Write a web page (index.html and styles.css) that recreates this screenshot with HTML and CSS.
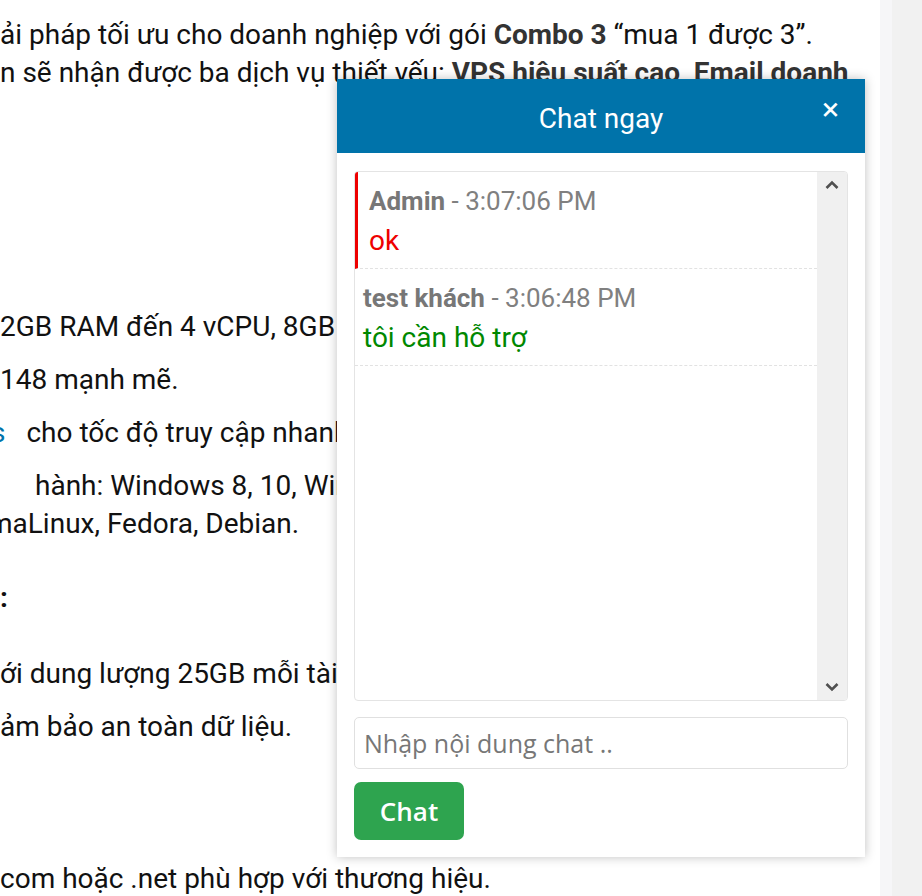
FILE: index.html
```html
<!DOCTYPE html>
<html lang="vi">
<head>
    <meta charset="UTF-8">
    <meta name="viewport" content="width=device-width, initial-scale=1.0">
    <title>Combo 3 - Chat ngay</title>
    <link rel="stylesheet" href="styles.css">
</head>
<body>

<div class="page">
    <main class="article">
        <p class="intro">ải pháp tối ưu cho doanh nghiệp với gói <b>Combo 3</b> “mua 1 được 3”.<br>n sẽ nhận được ba dịch vụ thiết yếu: <b>VPS hiệu suất cao, Email doanh</b></p>

        <ul class="specs">
            <li>2GB RAM đến 4 vCPU, 8GB RAM</li>
            <li>148 mạnh mẽ.</li>
            <li><span class="link-tail">s</span> cho tốc độ truy cập nhanh</li>
            <li class="os">hành: Windows 8, 10, Windows Server<br><span class="cut">m</span>aLinux, Fedora, Debian.</li>
        </ul>

        <h3 class="sub">:</h3>

        <ul class="specs mail">
            <li>ới dung lượng 25GB mỗi tài khoản</li>
            <li>ảm bảo an toàn dữ liệu.</li>
        </ul>

        <p class="domain">com hoặc .net phù hợp với thương hiệu.</p>
    </main>
    <div class="rail"></div>
    <div class="rail-2"></div>
</div>

<!-- khung chat noi -->
<div class="chat-box">
    <div class="chat-head">
        <span class="chat-title">Chat ngay</span>
        <span class="chat-close">&times;</span>
    </div>
    <div class="chat-body">
        <div class="chat-log">
            <div class="chat-list">
                <div class="msg msg-admin">
                    <div class="msg-meta"><b>Admin</b> - 3:07:06 PM</div>
                    <div class="msg-text">ok</div>
                </div>
                <div class="msg msg-guest">
                    <div class="msg-meta"><b>test khách</b> - 3:06:48 PM</div>
                    <div class="msg-text">tôi cần hỗ trợ</div>
                </div>
            </div>
            <div class="chat-scroll">
                <svg width="14" height="10" viewBox="0 0 14 10"><path d="M1.5 8 L7 2.5 L12.5 8" fill="none" stroke="#505050" stroke-width="2.6"/></svg>
                <svg width="14" height="10" viewBox="0 0 14 10"><path d="M1.5 2 L7 7.5 L12.5 2" fill="none" stroke="#505050" stroke-width="2.6"/></svg>
            </div>
        </div>
        <input type="text" class="chat-input" placeholder="Nhập nội dung chat ..">
        <div>
            <button class="chat-send">Chat</button>
        </div>
    </div>
</div>

</body>
</html>
```

FILE: styles.css
```css
html, body {
    margin: 0;
    padding: 0;
    overflow: hidden;
}

body {
    font-family: Roboto, 'Liberation Sans', Arial, sans-serif;
    background-color: #fff;
    color: #111;
}

.page {
    display: flex;
    height: 896px;
}

.article {
    width: 880px;
    background-color: #fff;
    font-size: 28px;
    line-height: 38px;
}

.rail {
    width: 12px;
    background-color: #f6f6f8;
}

.rail-2 {
    flex: 1;
    background-color: #f1f1f1;
}

.article p, .article ul, .article h3 {
    margin: 0;
    padding: 0;
    list-style: none;
}

.intro {
    margin-top: 16px !important;
    white-space: nowrap;
}

.intro b {
    color: #333;
}

.specs {
    margin-top: 216px !important;
}

.specs li {
    margin-bottom: 15px;
    white-space: nowrap;
}

.link-tail {
    color: #0073aa;
    margin-left: -9px;
    margin-right: 14px;
}

.os {
    text-indent: 35px;
}

.cut {
    margin-left: -12px;
}

.sub {
    margin-top: 36px !important;
    font-size: 28px;
    line-height: 38px;
    font-weight: bold;
}

.mail {
    margin-top: 38px !important;
}

.domain {
    margin-top: 114px !important;
}

/* chat widget */
.chat-box {
    position: absolute;
    left: 337px;
    top: 79px;
    width: 528px;
    height: 778px;
    background-color: #fff;
    box-shadow: 0 0 10px rgba(0, 0, 0, 0.25);
    display: flex;
    flex-direction: column;
}

.chat-head {
    height: 74px;
    background-color: #0073aa;
    color: #fff;
    display: flex;
    align-items: center;
    justify-content: center;
    position: relative;
}

.chat-title {
    font-size: 28px;
    padding-top: 4px;
}

.chat-close {
    position: absolute;
    right: 26px;
    top: 10px;
    font-size: 32px;
    line-height: 40px;
}

.chat-body {
    flex: 1;
    padding: 18px 17px 17px 17px;
    display: flex;
    flex-direction: column;
}

.chat-log {
    height: 528px;
    border: 1px solid #e4e4e4;
    border-radius: 4px;
    display: flex;
    overflow: hidden;
}

.chat-list {
    flex: 1;
}

.chat-scroll {
    width: 30px;
    background-color: #f0f0f0;
    display: flex;
    flex-direction: column;
    justify-content: space-between;
    align-items: center;
    padding: 8px 0 8px 0;
}

.msg {
    border-bottom: 1px dashed #e2e2e2;
    padding: 10px 8px 8px 8px;
    line-height: 38px;
}

.msg-admin {
    border-left: 3px solid #e00;
    padding-left: 11px;
}

.msg-meta {
    font-size: 26px;
    color: #808080;
}

.msg-meta b {
    color: #777;
}

.msg-text {
    font-size: 28px;
    padding-top: 2px;
}

.msg-admin .msg-text {
    color: #e00;
}

.msg-guest .msg-text {
    color: #080;
}

.chat-input {
    margin-top: 16px;
    height: 52px;
    box-sizing: border-box;
    border: 1px solid #e0e0e0;
    border-radius: 5px;
    padding: 0 9px;
    font-family: 'Open Sans', sans-serif;
    font-size: 25px;
    color: #333;
}

.chat-input::placeholder {
    color: #777;
}

.chat-send {
    margin-top: 13px;
    width: 110px;
    height: 58px;
    border: none;
    border-radius: 7px;
    background-color: #2ea44f;
    color: #fff;
    font-family: 'Open Sans', sans-serif;
    font-weight: 600;
    font-size: 26px;
    cursor: pointer;
}
```
